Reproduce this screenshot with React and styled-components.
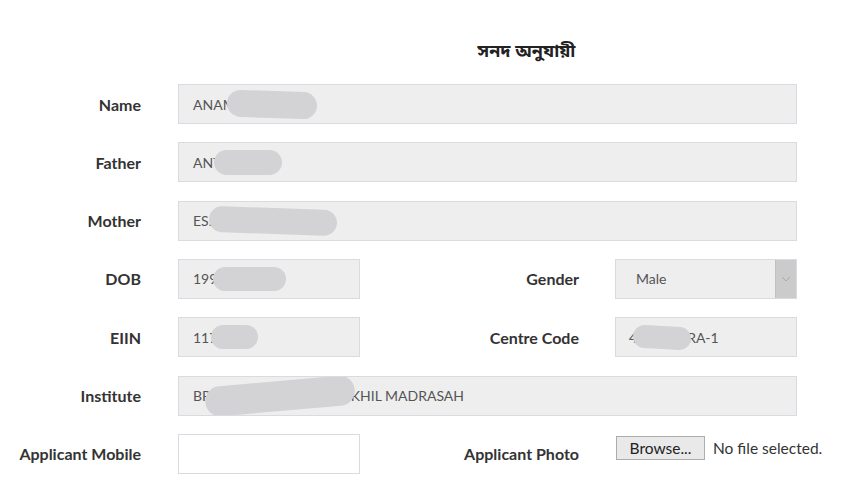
import React from "react";
import styled, { createGlobalStyle } from "styled-components";

const Global = createGlobalStyle`
  html, body { margin: 0; padding: 0; background: #fff; }
  body { font-family: Lato, "Open Sans", sans-serif; color: #333; }
`;

const Page = styled.div`
  width: 848px;
  height: 493px;
  padding-top: 40px;
  box-sizing: border-box;
`;

const Heading = styled.h3`
  margin: 0 0 20px 0;
  padding-left: 205px;
  height: 24px;
  line-height: 24px;
  text-align: center;
  font-size: 18px;
  font-weight: 700;
  color: #222;
  font-family: "Noto Sans Bengali", "Noto Sans", sans-serif;
`;

const Form = styled.div`
  display: grid;
  grid-template-columns: 178px 182px 255px 182px;
  grid-auto-rows: 40px;
  row-gap: 18.33px;
`;

const Label = styled.div`
  grid-column: ${(p) => p.$col};
  display: flex;
  align-items: center;
  justify-content: flex-end;
  padding-right: ${(p) => (p.$col === 3 ? 36 : 37)}px;
  font-size: 16px;
  font-weight: 700;
  color: #333;
  white-space: nowrap;
`;

const Field = styled.div`
  grid-column: ${(p) => p.$span};
  display: flex;
  align-items: center;
  box-sizing: border-box;
  height: 40px;
  padding-left: ${(p) => p.$pad || 14}px;
  background: ${(p) => (p.$white ? "#fff" : "#eeeeee")};
  border: 1px solid #d8dce2;
  font-size: 14px;
  color: #555;
  white-space: nowrap;
  overflow: hidden;
  position: relative;
`;

const Blob = styled.span`
  display: inline-block;
  flex: none;
  width: ${(p) => p.$w}px;
  height: ${(p) => p.$h}px;
  margin-left: ${(p) => p.$ml}px;
  margin-right: ${(p) => p.$mr || 0}px;
  margin-top: ${(p) => p.$mt || 0}px;
  border-radius: ${(p) => p.$h / 2}px;
  background: #d3d3d5;
  transform: rotate(${(p) => p.$rot || 0}deg);
  position: relative;
  z-index: 1;
`;

const SelectArrow = styled.span`
  position: absolute;
  right: 0;
  top: 0;
  bottom: 0;
  width: 20px;
  background: #cbcbcb;
  border-left: 1px solid #c0c0c0;
  display: flex;
  align-items: center;
  justify-content: center;
`;

const FileCell = styled.div`
  grid-column: 4 / 6;
  align-self: start;
  margin-top: 2px;
  display: flex;
  align-items: center;
  gap: 8px;
  white-space: nowrap;
`;

const BrowseButton = styled.button`
  box-sizing: border-box;
  width: 89px;
  height: 24px;
  padding: 0;
  background: #e9e9e9;
  border: 1px solid #adadad;
  border-radius: 0;
  font-family: Lato, "Open Sans", sans-serif;
  font-size: 15.5px;
  color: #222;
  margin-left: 1px;
`;

const FileText = styled.span`
  font-size: 15.5px;
  color: #333;
`;

export default function App() {
  return (
    <Page>
      <Global />
      <Heading>সনদ অনুযায়ী</Heading>
      <Form>
        <Label $col={1}>Name</Label>
        <Field $span="2 / 5">
          ANAM<Blob $w={90} $h={27} $ml={-9} $rot={2} />
        </Field>

        <Label $col={1}>Father</Label>
        <Field $span="2 / 5">
          ANT<Blob $w={68} $h={25} $ml={-7} />
        </Field>

        <Label $col={1}>Mother</Label>
        <Field $span="2 / 5">
          ES.<Blob $w={128} $h={26} $ml={-3} $rot={2} />
        </Field>

        <Label $col={1}>DOB</Label>
        <Field $span="2 / 3">
          199<Blob $w={73} $h={24} $ml={-4} />
        </Field>
        <Label $col={3}>Gender</Label>
        <Field $span="4 / 5" $pad={20}>
          Male
          <SelectArrow>
            <svg width="10" height="6" viewBox="0 0 10 6">
              <path d="M1 1 L5 5 L9 1" fill="none" stroke="#a9a9a9" strokeWidth="1" />
            </svg>
          </SelectArrow>
        </Field>

        <Label $col={1}>EIIN</Label>
        <Field $span="2 / 3">
          117<Blob $w={47} $h={24} $ml={-6} />
        </Field>
        <Label $col={3}>Centre Code</Label>
        <Field $span="4 / 5" $pad={13}>
          4<Blob $w={58} $h={23} $ml={-4} $mr={-4} $rot={3} />RA-1
        </Field>

        <Label $col={1}>Institute</Label>
        <Field $span="2 / 5">
          BR<Blob $w={150} $h={30} $ml={-6} $mr={-4} $rot={-5} />KHIL MADRASAH
        </Field>

        <Label $col={1}>Applicant Mobile</Label>
        <Field $span="2 / 3" $white />
        <Label $col={3}>Applicant Photo</Label>
        <FileCell>
          <BrowseButton>Browse...</BrowseButton>
          <FileText>No file selected.</FileText>
        </FileCell>
      </Form>
    </Page>
  );
}
